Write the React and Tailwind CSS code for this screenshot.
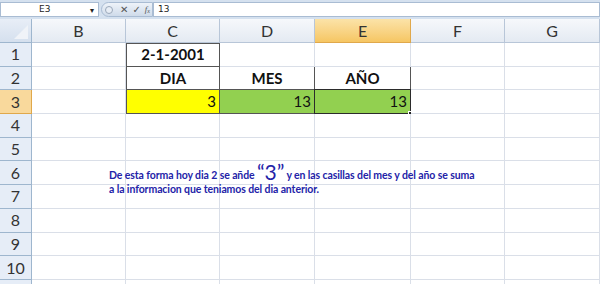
import React from "react";

const COLS = [
  { key: "B", w: 94 },
  { key: "C", w: 94 },
  { key: "D", w: 95 },
  { key: "E", w: 96 },
  { key: "F", w: 94 },
  { key: "G", w: 95 },
];

const cellFont = { fontFamily: "Lato, 'Open Sans', sans-serif" };

// contents of the little table C1:E3
const data = {
  C1: { text: "2-1-2001", bold: true, align: "center", box: "tlrb" },
  C2: { text: "DIA", bold: true, align: "center", box: "lrb" },
  D2: { text: "MES", bold: true, align: "center", box: "rb" },
  E2: { text: "AÑO", bold: true, align: "center", box: "rb" },
  C3: { text: "3", align: "right", bg: "bg-[#ffff00]", box: "lrb" },
  D3: { text: "13", align: "right", bg: "bg-[#92d050]", box: "rb" },
  E3: { text: "13", align: "right", bg: "bg-[#92d050]", box: "rb", selected: true },
};

function Cell({ id, w }) {
  const c = data[id];
  const box = c?.box || "";
  return (
    <div
      className={`relative h-full shrink-0 flex items-center px-[3px] text-[15px] text-[#111] leading-none
        ${c?.bg || "bg-white"}
        ${box.includes("r") ? "border-r border-r-[#555]" : "border-r border-r-[#dadfe8]"}
        ${box.includes("b") ? "border-b border-b-[#555]" : "border-b border-b-[#dadfe8]"}
        ${box.includes("t") ? "border-t border-t-[#555]" : ""}
        ${box.includes("l") ? "border-l border-l-[#555]" : ""}
        ${c?.align === "center" ? "justify-center" : c?.align === "right" ? "justify-end" : "justify-start"}
        ${c?.bold ? "font-bold" : "font-normal"}`}
      style={{ width: w, ...cellFont }}
    >
      {c?.text}
      {c?.selected && (
        <>
          <div className="absolute inset-[-1px] border-[1.5px] border-[#2b2b2b] pointer-events-none" />
          <div className="absolute right-[-3px] bottom-[-3px] w-[5px] h-[5px] bg-[#222] border border-white" />
        </>
      )}
    </div>
  );
}

function FormulaBar() {
  return (
    <div className="h-[19px] bg-[#d5e1ef] flex items-end pb-[2px] gap-0" style={{ fontFamily: "'DejaVu Sans', sans-serif" }}>
      <div className="h-[15px] w-[99px] bg-white border border-[#a9bcd3] flex items-center relative">
        <span className="text-[9px] text-[#222] ml-[38px]">E3</span>
        <span className="absolute right-[4px] top-[2px] text-[8px] text-[#222]">▾</span>
      </div>
      <div className="h-[15px] w-[52px] ml-[2px] rounded-l-full bg-gradient-to-b from-[#eef3f9] to-[#cfdbea] border border-[#a9bcd3] flex items-center text-[#555]">
        <span className="ml-[3px] w-[8px] h-[8px] rounded-full border border-[#9aa8ba] bg-[#e7edf5]" />
        <span className="ml-[7px] text-[10px] font-bold">✕</span>
        <span className="ml-[4px] text-[10px] font-bold">✓</span>
        <span className="ml-[4px] text-[9px] italic" style={{ fontFamily: "'Liberation Serif', serif" }}>f<sub className="text-[6px]">x</sub></span>
      </div>
      <div className="h-[15px] flex-1 bg-white border border-[#a9bcd3] flex items-center">
        <span className="ml-[4px] text-[9px] text-[#222]">13</span>
      </div>
    </div>
  );
}

export default function App() {
  const rows = Array.from({ length: 11 }, (_, i) => i + 1);
  return (
    <div className="w-[600px] h-[284px] overflow-hidden bg-white relative">
      <FormulaBar />

      {/* column headers */}
      <div className="flex h-[24px]" style={cellFont}>
        <div className="w-[32px] h-full shrink-0 bg-gradient-to-b from-[#e8eef7] to-[#d5e0ee] border-r border-b border-[#9eb6ce] relative">
          <div className="absolute right-[3px] bottom-[3px] w-0 h-0 border-l-[14px] border-l-transparent border-b-[14px] border-b-[#f0f3f8]" />
        </div>
        {COLS.map((c) => (
          <div
            key={c.key}
            className={`h-full shrink-0 flex items-center justify-center text-[16px] border-r border-b
              ${c.key === "E"
                ? "bg-gradient-to-b from-[#fbe3a8] to-[#f6c662] border-[#e0a84b] text-[#333]"
                : "bg-gradient-to-b from-[#f6f8fb] to-[#e4eaf2] border-[#b8c6d8] text-[#333]"}`}
            style={{ width: c.w }}
          >
            {c.key}
          </div>
        ))}
      </div>

      {/* rows */}
      {rows.map((r) => (
        <div key={r} className="flex h-[23.7px]" style={cellFont}>
          <div
            className={`w-[32px] h-full shrink-0 flex items-center justify-center text-[16px] text-[#333] border-r border-b
              ${r === 3 ? "bg-[#f9d99c] border-[#e0a84b]" : "bg-[#e6edf7] border-[#9eb6ce]"}`}
          >
            {r < 11 ? r : ""}
          </div>
          {COLS.map((c) => (
            <Cell key={c.key} id={`${c.key}${r}`} w={c.w} />
          ))}
        </div>
      ))}

      {/* transparent text box over the sheet */}
      <div
        className="absolute left-[109px] top-[160px] text-[#2323a8] text-[10.5px] leading-[14px] font-bold whitespace-nowrap tracking-[-0.1px]"
        style={{ fontFamily: "Lato, 'Open Sans', sans-serif" }}
      >
        <div>
          De esta forma hoy dia 2 se añde{" "}
          <span className="text-[21px] font-normal leading-none relative top-[1px]">“3”</span> y en las casillas del mes y del año se suma
        </div>
        <div>a la informacion que teniamos del dia anterior.</div>
      </div>
    </div>
  );
}
